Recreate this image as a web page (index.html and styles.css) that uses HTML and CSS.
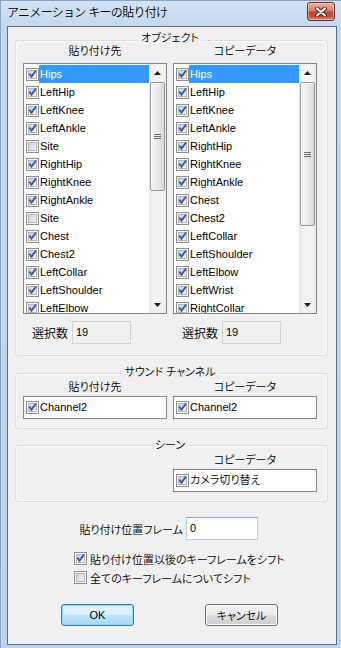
FILE: index.html
```html
<!DOCTYPE html>
<html lang="ja">
<head>
<meta charset="utf-8">
<title>アニメーション キーの貼り付け</title>
<link rel="stylesheet" href="styles.css">
</head>
<body>
<svg class="defs" width="0" height="0" aria-hidden="true">
  <defs>
    <linearGradient id="cbg" x1="0" y1="0" x2="1" y2="1">
      <stop offset="0" stop-color="#c9cdd2"/>
      <stop offset="1" stop-color="#f7f7f7"/>
    </linearGradient>
    <symbol id="cb-off" viewBox="0 0 13 13">
      <rect x="0.5" y="0.5" width="12" height="12" fill="#f6f6f6" stroke="#8e8f8f"/>
      <rect x="2.5" y="2.5" width="8" height="8" fill="url(#cbg)" stroke="#b3b7bc"/>
    </symbol>
    <symbol id="cb-on" viewBox="0 0 13 13">
      <rect x="0.5" y="0.5" width="12" height="12" fill="#f6f6f6" stroke="#8e8f8f"/>
      <rect x="2.5" y="2.5" width="8" height="8" fill="url(#cbg)" stroke="#b3b7bc"/>
      <polygon points="2.6,6.3 4.1,5 5.4,7 9.4,1.9 10.8,3.1 5.5,10.2" fill="#3a58a3"/>
    </symbol>
  </defs>
</svg>
<div class="window">
  <div class="titlebar">
    <div class="title">アニメーション キーの貼り付け</div>
    <div class="close">
      <svg width="12" height="10" viewBox="0 0 12 10">
        <path d="M2 1.5 L10 8.5 M10 1.5 L2 8.5" stroke="#4a1a12" stroke-width="4" stroke-linecap="round"/>
        <path d="M2 1.5 L10 8.5 M10 1.5 L2 8.5" stroke="#ffffff" stroke-width="2.2" stroke-linecap="round"/>
      </svg>
    </div>
  </div>
  <div class="client">
    <div class="group g1">
      <div class="gtitle">オブジェクト</div>
      <div class="cols">
        <div class="col">
          <div class="clabel">貼り付け先</div>
          <div class="list">
            <div class="items">
              <div class="row"><svg class="cb"><use href="#cb-on"/></svg><span class="lbl sel">Hips</span></div>
              <div class="row"><svg class="cb"><use href="#cb-on"/></svg><span class="lbl">LeftHip</span></div>
              <div class="row"><svg class="cb"><use href="#cb-on"/></svg><span class="lbl">LeftKnee</span></div>
              <div class="row"><svg class="cb"><use href="#cb-on"/></svg><span class="lbl">LeftAnkle</span></div>
              <div class="row"><svg class="cb"><use href="#cb-off"/></svg><span class="lbl">Site</span></div>
              <div class="row"><svg class="cb"><use href="#cb-on"/></svg><span class="lbl">RightHip</span></div>
              <div class="row"><svg class="cb"><use href="#cb-on"/></svg><span class="lbl">RightKnee</span></div>
              <div class="row"><svg class="cb"><use href="#cb-on"/></svg><span class="lbl">RightAnkle</span></div>
              <div class="row"><svg class="cb"><use href="#cb-off"/></svg><span class="lbl">Site</span></div>
              <div class="row"><svg class="cb"><use href="#cb-on"/></svg><span class="lbl">Chest</span></div>
              <div class="row"><svg class="cb"><use href="#cb-on"/></svg><span class="lbl">Chest2</span></div>
              <div class="row"><svg class="cb"><use href="#cb-on"/></svg><span class="lbl">LeftCollar</span></div>
              <div class="row"><svg class="cb"><use href="#cb-on"/></svg><span class="lbl">LeftShoulder</span></div>
              <div class="row"><svg class="cb"><use href="#cb-on"/></svg><span class="lbl">LeftElbow</span></div>
            </div>
            <div class="sb">
              <div class="sb-btn"><svg width="7" height="4" viewBox="0 0 7 4"><polygon points="3.5,0 7,4 0,4" fill="#1e1e1e"/></svg></div>
              <div class="sb-track"><div class="thumb thumb-l"><span class="grip"></span></div></div>
              <div class="sb-btn"><svg width="7" height="4" viewBox="0 0 7 4"><polygon points="0,0 7,0 3.5,4" fill="#1e1e1e"/></svg></div>
            </div>
          </div>
          <div class="count-row"><span class="count-label">選択数</span><span class="count">19</span></div>
        </div>
        <div class="col">
          <div class="clabel">コピーデータ</div>
          <div class="list">
            <div class="items">
              <div class="row"><svg class="cb"><use href="#cb-on"/></svg><span class="lbl sel">Hips</span></div>
              <div class="row"><svg class="cb"><use href="#cb-on"/></svg><span class="lbl">LeftHip</span></div>
              <div class="row"><svg class="cb"><use href="#cb-on"/></svg><span class="lbl">LeftKnee</span></div>
              <div class="row"><svg class="cb"><use href="#cb-on"/></svg><span class="lbl">LeftAnkle</span></div>
              <div class="row"><svg class="cb"><use href="#cb-on"/></svg><span class="lbl">RightHip</span></div>
              <div class="row"><svg class="cb"><use href="#cb-on"/></svg><span class="lbl">RightKnee</span></div>
              <div class="row"><svg class="cb"><use href="#cb-on"/></svg><span class="lbl">RightAnkle</span></div>
              <div class="row"><svg class="cb"><use href="#cb-on"/></svg><span class="lbl">Chest</span></div>
              <div class="row"><svg class="cb"><use href="#cb-on"/></svg><span class="lbl">Chest2</span></div>
              <div class="row"><svg class="cb"><use href="#cb-on"/></svg><span class="lbl">LeftCollar</span></div>
              <div class="row"><svg class="cb"><use href="#cb-on"/></svg><span class="lbl">LeftShoulder</span></div>
              <div class="row"><svg class="cb"><use href="#cb-on"/></svg><span class="lbl">LeftElbow</span></div>
              <div class="row"><svg class="cb"><use href="#cb-on"/></svg><span class="lbl">LeftWrist</span></div>
              <div class="row"><svg class="cb"><use href="#cb-on"/></svg><span class="lbl">RightCollar</span></div>
            </div>
            <div class="sb">
              <div class="sb-btn"><svg width="7" height="4" viewBox="0 0 7 4"><polygon points="3.5,0 7,4 0,4" fill="#1e1e1e"/></svg></div>
              <div class="sb-track"><div class="thumb thumb-r"><span class="grip"></span></div></div>
              <div class="sb-btn"><svg width="7" height="4" viewBox="0 0 7 4"><polygon points="0,0 7,0 3.5,4" fill="#1e1e1e"/></svg></div>
            </div>
          </div>
          <div class="count-row"><span class="count-label">選択数</span><span class="count">19</span></div>
        </div>
      </div>
    </div>

    <div class="group g2">
      <div class="gtitle">サウンド チャンネル</div>
      <div class="cols">
        <div class="col">
          <div class="clabel">貼り付け先</div>
          <div class="box"><div class="row"><svg class="cb"><use href="#cb-on"/></svg><span class="lbl">Channel2</span></div></div>
        </div>
        <div class="col">
          <div class="clabel">コピーデータ</div>
          <div class="box"><div class="row"><svg class="cb"><use href="#cb-on"/></svg><span class="lbl">Channel2</span></div></div>
        </div>
      </div>
    </div>

    <div class="group g3">
      <div class="gtitle">シーン</div>
      <div class="cols">
        <div class="col"></div>
        <div class="col">
          <div class="clabel">コピーデータ</div>
          <div class="box"><div class="row"><svg class="cb"><use href="#cb-on"/></svg><span class="lbl jp">カメラ切り替え</span></div></div>
        </div>
      </div>
    </div>

    <div class="frame-row">
      <span class="frame-label">貼り付け位置フレーム</span>
      <span class="input">0</span>
    </div>

    <div class="checks">
      <div class="check"><svg class="cb"><use href="#cb-on"/></svg><span>貼り付け位置以後のキーフレームをシフト</span></div>
      <div class="check"><svg class="cb"><use href="#cb-off"/></svg><span>全てのキーフレームについてシフト</span></div>
    </div>

    <div class="buttons">
      <button class="btn default">OK</button>
      <button class="btn">キャンセル</button>
    </div>
  </div>
</div>
</body>
</html>
```

FILE: styles.css
```css
* { box-sizing: border-box; }

body {
  margin: 0;
  font-family: "Liberation Sans", "Noto Sans CJK JP", sans-serif;
  font-size: 11px;
  font-weight: 350;
  font-feature-settings: "palt";
  color: #000;
}

.defs { display: block; width: 0; height: 0; overflow: hidden; }

.window {
  width: 341px;
  height: 648px;
  display: flex;
  flex-direction: column;
  background: linear-gradient(#d3e3f4, #c3d8ee 26px, #bed4eb);
  border-left: 1px solid #8aa5c4;
  border-top: 1px solid #8aa5c4;
  padding: 0 4px 3px 6px;
}

.titlebar {
  height: 25px;
  display: flex;
  justify-content: space-between;
  align-items: flex-start;
}

.title {
  margin-top: 5px;
  line-height: 14px;
  font-size: 12px;
  letter-spacing: -0.7px;
  font-feature-settings: normal;
}

.close {
  margin: 1px 2px 0 0;
  width: 28px;
  height: 19px;
  border: 1px solid #6e2b21;
  border-radius: 3px;
  background: linear-gradient(#ebb0a3, #d97e6c 45%, #c8462f 52%, #c5523d 80%, #dd8f74);
  box-shadow: inset 0 0 0 1px rgba(255, 235, 225, 0.45);
  display: flex;
  align-items: center;
  justify-content: center;
}

.client {
  flex: 1;
  background: #f0f0f0;
  border: 1px solid #56708f;
  display: flex;
  flex-direction: column;
  padding: 0 8px 0 7px;
}

.group {
  border: 1px solid #d5dfe5;
  border-radius: 3px;
  box-shadow: inset 0 0 0 1px #fbfbfb;
  display: flex;
  flex-direction: column;
}

.g1 { margin-top: 13px; padding: 0 10px 11px 7px; }
.g2 { margin-top: 17px; padding: 0 10px 9px 7px; }
.g3 { margin-top: 16px; padding: 0 10px 9px 7px; }

.gtitle {
  align-self: center;
  line-height: 12px;
  padding: 0 3px;
  background: #f0f0f0;
}
.g1 .gtitle { margin-top: -9px; }
.g2 .gtitle { margin-top: -8px; }
.g3 .gtitle { margin-top: -7px; }

.cols { display: flex; gap: 6px; }
.col { width: 144px; display: flex; flex-direction: column; }

.clabel { text-align: center; line-height: 14px; }
.g2 .clabel, .g3 .clabel { margin-top: 2px; }

.list {
  margin-top: 5px;
  height: 251px;
  border: 1px solid #828790;
  background: #fff;
  display: flex;
}

.items {
  flex: 1;
  overflow: hidden;
  padding-top: 1px;
}

.row {
  height: 18px;
  display: flex;
  align-items: center;
  padding-left: 2px;
}

.cb { width: 13px; height: 13px; flex: none; display: block; }

.lbl {
  flex: 1;
  padding-left: 1px;
  line-height: 18px;
  font-size: 11px;
  font-weight: 400;
  white-space: nowrap;
}
.lbl.jp { font-weight: 350; }
.lbl.sel { background: #3399ff; color: #fff; }

.sb {
  width: 17px;
  flex: none;
  display: flex;
  flex-direction: column;
  background: linear-gradient(to right, #e6e6e6, #f3f3f3 25%, #f3f3f3 75%, #ebebeb);
}

.sb-btn {
  height: 17px;
  display: flex;
  align-items: center;
  justify-content: center;
}
.sb-btn svg { display: block; }

.sb-track { flex: 1; display: flex; flex-direction: column; }

.thumb {
  margin: 1px 1px 0;
  border: 1px solid #979797;
  border-radius: 2px;
  background: linear-gradient(to right, #f5f5f5, #e9e9e9 50%, #d9d9d9);
  box-shadow: inset 1px 1px 0 #fff;
  display: flex;
  align-items: center;
  justify-content: center;
}
.thumb-l { height: 109px; }
.thumb-r { height: 144px; }

.grip {
  width: 7px;
  height: 5px;
  background: repeating-linear-gradient(#6a6a6a 0 1px, transparent 1px 2px);
}

.count-row {
  margin-top: 7px;
  height: 23px;
  display: flex;
  align-items: center;
  padding-left: 9px;
}
.count-label { width: 40px; font-size: 12px; }
.count {
  width: 59px;
  height: 23px;
  border: 1px solid #d3d3d3;
  background: #f0f0f0;
  padding-left: 3px;
  line-height: 21px;
  font-weight: 400;
}

.box {
  margin-top: 2px;
  height: 23px;
  border: 1px solid #828790;
  background: #fff;
  padding-top: 1px;
}

.frame-row {
  margin-top: 15px;
  height: 23px;
  display: flex;
  align-items: center;
  padding-left: 58px;
}
.frame-label { width: 110px; text-align: right; margin-right: 3px; }
.input {
  width: 72px;
  height: 23px;
  border: 1px solid #b6d0ea;
  border-top-color: #80a9d4;
  background: #fff;
  padding-left: 3px;
  line-height: 21px;
  font-weight: 400;
}

.checks {
  margin-top: 9px;
  padding-left: 59px;
  display: flex;
  flex-direction: column;
}
.check {
  height: 19px;
  display: flex;
  align-items: center;
  gap: 3px;
}

.buttons {
  margin-top: 17px;
  padding-left: 46px;
  display: flex;
  gap: 71px;
}

.btn {
  width: 73px;
  height: 22px;
  border: 1px solid #707070;
  border-radius: 3px;
  background: linear-gradient(#f2f2f2, #ebebeb 50%, #dddddd 50%, #cfcfcf);
  box-shadow: inset 0 0 0 1px #fcfcfc;
  font: inherit;
  font-size: 11px;
  color: #000;
  padding: 0;
}
.btn.default {
  border-color: #3c7fb1;
  background: linear-gradient(#e7f5fd, #d6effc 50%, #bde4fb 50%, #a9daf6);
  box-shadow: inset 0 0 0 1px #8ed6f8;
}
```
